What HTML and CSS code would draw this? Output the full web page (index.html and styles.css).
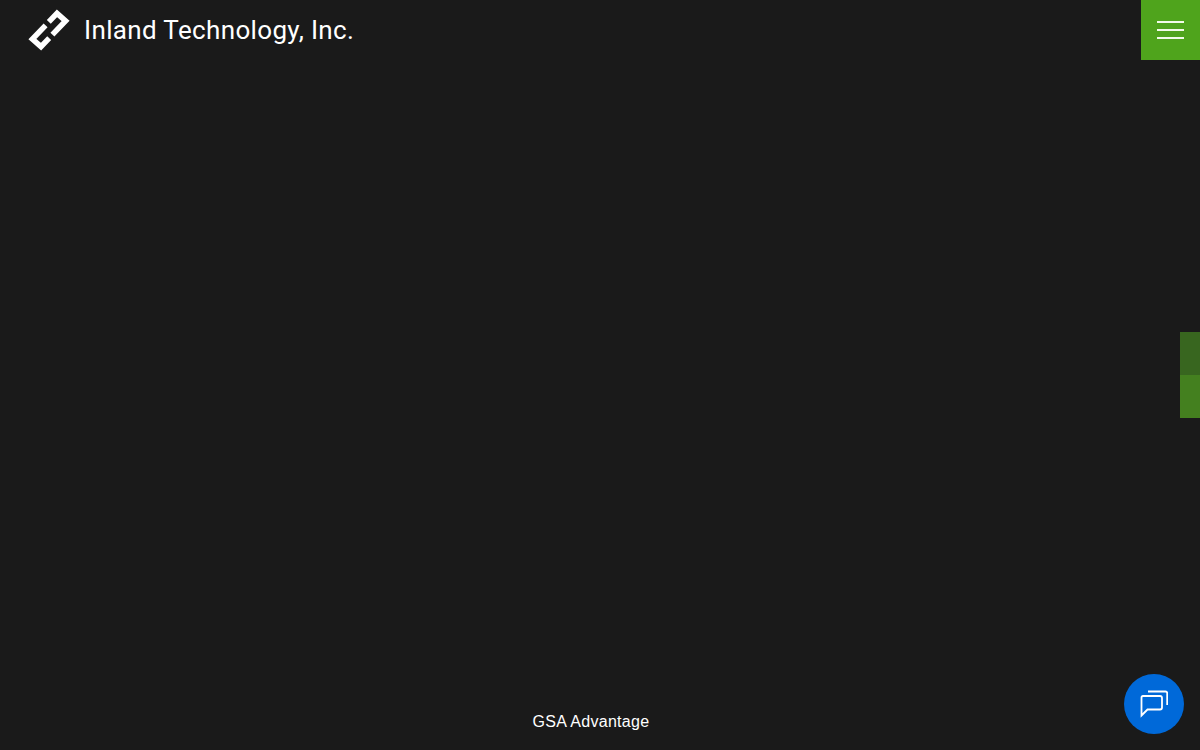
FILE: index.html
```html
<!DOCTYPE html>
<html>
<head>
  <title>Inland Technology, Inc.</title>
  <link rel="stylesheet" href="styles.css">
</head>
<body>
  <header class="top-bar">
    <a class="brand" href="#">
      <svg class="brand-logo" viewBox="0 0 42 42" width="42" height="42" fill="none" stroke="#fff" stroke-width="5.5" stroke-miterlimit="4">
        <path d="M20.8 12.9 L29 4.4 L37.6 12 L24.4 25.7"/>
        <path d="M21.2 29.1 L13 37.6 L4.4 30 L17.6 16.3"/>
      </svg>
      <span class="brand-name">Inland Technology, Inc.</span>
    </a>
    <button class="menu-button">
      <span class="menu-line"></span>
      <span class="menu-line"></span>
      <span class="menu-line"></span>
    </button>
  </header>

  <div class="side-tabs">
    <div class="side-tab side-tab-dark"></div>
    <div class="side-tab side-tab-light"></div>
  </div>

  <footer class="bottom-bar">
    <a class="gsa-link" href="#">GSA Advantage</a>
  </footer>

  <button class="chat-button">
    <svg viewBox="0 0 28 28" width="28" height="28" fill="none" stroke="#fff" stroke-width="1.8">
      <path d="M3 6 H20 Q22 6 22 8 V17.5 Q22 19.5 20 19.5 H7.5 L1.5 25.5 V7.5 Q1.5 6 3 6 Z"/>
      <path d="M8 1.5 H25.5 Q27.2 1.5 27.2 3.2 V15"/>
    </svg>
  </button>
</body>
</html>
```

FILE: styles.css
```css
html, body{
    height: 100%;
}

body{
    margin: 0;
    background-color: #1a1a1a;
    color: #fff;
    font-family: "Liberation Sans", Arial, sans-serif;
    display: flex;
    flex-direction: column;
    justify-content: space-between;
    overflow: hidden;
}

.top-bar{
    display: flex;
    justify-content: space-between;
    align-items: flex-start;
    height: 60px;
}

.brand{
    display: flex;
    align-items: center;
    height: 60px;
    padding-left: 28px;
    color: #fff;
    text-decoration: none;
}

.brand-logo{
    margin-right: 14px;
}

.brand-name{
    font-family: Roboto, sans-serif;
    font-size: 26px;
    font-weight: 400;
    letter-spacing: 0.35px;
}

.menu-button{
    width: 59px;
    height: 60px;
    border: none;
    padding: 0;
    background-color: #4fa41c;
    display: flex;
    flex-direction: column;
    align-items: center;
    justify-content: center;
    gap: 6px;
}

.menu-line{
    display: block;
    width: 27px;
    height: 2px;
    background-color: #f2fbe8;
}

.side-tabs{
    position: absolute;
    top: 332px;
    right: 0;
    width: 20px;
}

.side-tab{
    height: 43px;
}

.side-tab-dark{
    background-color: #38661f;
}

.side-tab-light{
    background-color: #44801f;
}

.bottom-bar{
    display: flex;
    justify-content: center;
    padding-right: 18px;
    padding-bottom: 19px;
}

.gsa-link{
    color: #fff;
    font-size: 16px;
    line-height: 18px;
    letter-spacing: 0.3px;
    text-decoration: none;
}

.chat-button{
    position: absolute;
    right: 16px;
    bottom: 16px;
    width: 60px;
    height: 60px;
    border: none;
    border-radius: 50%;
    padding: 0;
    background-color: #0069d9;
    display: flex;
    align-items: center;
    justify-content: center;
}
```
